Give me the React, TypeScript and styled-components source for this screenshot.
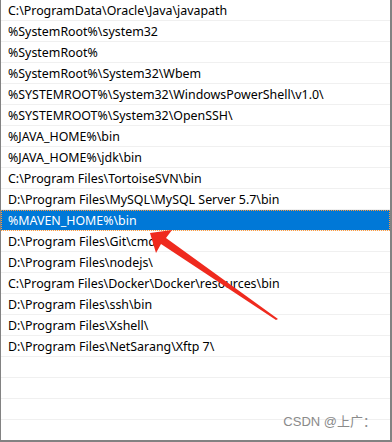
import styled, { createGlobalStyle } from "styled-components";

const GlobalStyle = createGlobalStyle`
  html, body { margin: 0; padding: 0; background: #fff; }
  body { font-family: "Noto Sans", "Noto Sans CJK SC", sans-serif; }
`;

const Frame = styled.div`
  position: relative;
  width: 392px;
  height: 442px;
  box-sizing: border-box;
  border-left: 1px solid #828282;
  border-right: 2px solid #828282;
  border-bottom: 2px solid #828282;
  overflow: hidden;
  background: #fff;
`;

const List = styled.ul`
  list-style: none;
  margin: 0;
  padding: 0;
  display: flex;
  flex-direction: column;
`;

const Row = styled.li<{ selected?: boolean }>`
  height: 21px;
  box-sizing: border-box;
  border-bottom: 1px solid #f0f0f0;
  padding-left: 7px;
  display: flex;
  align-items: center;
  font-size: 12.4px;
  color: ${(p) => (p.selected ? "#fff" : "#000")};
  background: ${(p) => (p.selected ? "#0078d7" : "transparent")};
  outline: ${(p) => (p.selected ? "1px dotted #ff9a3c" : "none")};
  outline-offset: -1px;
  white-space: nowrap;
`;

const Watermark = styled.div`
  position: absolute;
  right: 14px;
  bottom: 10px;
  font-size: 13px;
  color: #8a8a8a;
  font-family: "Liberation Sans", "Noto Sans CJK SC", sans-serif;
`;

const Arrow = styled.svg`
  position: absolute;
  left: 0;
  top: 0;
  pointer-events: none;
`;

const paths = [
  "C:\\ProgramData\\Oracle\\Java\\javapath",
  "%SystemRoot%\\system32",
  "%SystemRoot%",
  "%SystemRoot%\\System32\\Wbem",
  "%SYSTEMROOT%\\System32\\WindowsPowerShell\\v1.0\\",
  "%SYSTEMROOT%\\System32\\OpenSSH\\",
  "%JAVA_HOME%\\bin",
  "%JAVA_HOME%\\jdk\\bin",
  "C:\\Program Files\\TortoiseSVN\\bin",
  "D:\\Program Files\\MySQL\\MySQL Server 5.7\\bin",
  "%MAVEN_HOME%\\bin",
  "D:\\Program Files\\Git\\cmd",
  "D:\\Program Files\\nodejs\\",
  "C:\\Program Files\\Docker\\Docker\\resources\\bin",
  "D:\\Program Files\\ssh\\bin",
  "D:\\Program Files\\Xshell\\",
  "D:\\Program Files\\NetSarang\\Xftp 7\\",
];

export default function App() {
  const rows = [...paths, "", "", "", "", ""];
  return (
    <>
      <GlobalStyle />
      <Frame>
        <List>
          {rows.map((p, i) => (
            <Row key={i} selected={i === 10}>
              {p}
            </Row>
          ))}
        </List>
        <Arrow width="392" height="442">
          <polygon
            points="149,233 171,230 165,238 277,319 275,320 160,244 155,253"
            fill="#ef2a1e"
          />
        </Arrow>
        <Watermark>CSDN @上广：</Watermark>
      </Frame>
    </>
  );
}
